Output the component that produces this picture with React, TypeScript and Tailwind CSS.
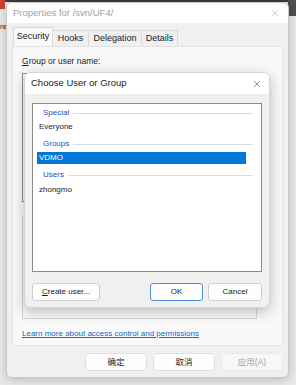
import { X } from "lucide-react";

const ui = { fontFamily: '"Liberation Sans", "Noto Sans CJK SC", Arial, sans-serif' };

function GroupHeader({ label }: { label: string }) {
  return (
    <div className="flex items-center h-[14px] pl-[10px] pr-[8px] gap-[4px]">
      <span className="text-[8px] text-[#2a4cb4]">{label}</span>
      <div className="flex-1 h-px bg-[#d5dbe8]" />
    </div>
  );
}

function ChooseDialog() {
  return (
    <div className="absolute left-[24px] top-[72px] w-[246px] h-[236px] rounded-[6px] overflow-hidden bg-[#f0f0f0] border border-[#d6d6d6] shadow-[0_4px_14px_rgba(0,0,0,0.25)] flex flex-col">
      <div className="h-[21px] bg-white flex items-center justify-between pl-[6px] pr-[7px] shrink-0">
        <span className="text-[9.5px] text-[#1a1a1a]">Choose User or Group</span>
        <X className="w-[10px] h-[10px] text-[#333]" strokeWidth={1.3} />
      </div>
      <div className="flex-1 flex flex-col px-[7px] pt-[9px] pb-[7px]">
        <div className="h-[169px] bg-white border border-[#8a8a8a] pt-[2px]">
          <GroupHeader label="Special" />
          <div className="h-[14px] flex items-center pl-[6px] text-[8px] text-[#1a1a1a]">Everyone</div>
          <div className="mt-[3px]">
            <GroupHeader label="Groups" />
          </div>
          <div className="mt-[1px] ml-[4px] w-[209px] h-[12px] bg-[#0078d7] flex items-center pl-[2px] text-[8px] text-white">
            VDMO
          </div>
          <div className="mt-[4px]">
            <GroupHeader label="Users" />
          </div>
          <div className="mt-[1px] h-[14px] flex items-center pl-[6px] text-[8px] text-[#1a1a1a]">zhongmo</div>
        </div>
        <div className="mt-[11px] flex items-center">
          <button className="w-[68px] h-[18px] bg-[#fdfdfd] border border-[#d0d0d0] rounded-[3px] text-[8px] text-[#1a1a1a]">
            <span className="underline">C</span>reate user...
          </button>
          <div className="flex-1" />
          <button className="w-[53px] h-[18px] bg-[#fdfdfd] border border-[#4a8fd8] rounded-[3px] text-[8px] text-[#1a1a1a]">
            OK
          </button>
          <button className="ml-[5px] w-[54px] h-[18px] bg-[#fdfdfd] border border-[#d0d0d0] rounded-[3px] text-[8px] text-[#1a1a1a]">
            Cancel
          </button>
        </div>
      </div>
    </div>
  );
}

export default function App() {
  return (
    <div className="relative w-[296px] h-[385px] overflow-hidden bg-[#e9e9e9]" style={ui}>
      {/* desktop behind the window */}
      <div className="absolute left-0 top-0 w-full h-[2px] bg-[#3d3d3d]" />
      <div className="absolute left-0 top-0 w-[5px] h-[9px] bg-[#c9432f]" />
      <div className="absolute right-0 top-0 w-[8px] h-[16px] bg-[#4e4e4e]" />
      <div className="absolute left-0 top-[22px] text-[7px] text-[#222] tracking-[-0.5px]">ne</div>

      {/* properties window */}
      <div className="absolute left-[6px] top-[2px] w-[283px] h-[376px] rounded-[6px] overflow-hidden bg-[#f0f0f0] border border-[#c8c8c8] shadow-[0_2px_10px_rgba(0,0,0,0.2)] flex flex-col">
        <div className="h-[20px] bg-white flex items-center justify-between pl-[6px] pr-[8px] shrink-0">
          <span className="text-[9.5px] text-[#a3a3a3]">Properties for /svn/UF4/</span>
          <X className="w-[10px] h-[10px] text-[#9a9a9a]" strokeWidth={1.2} />
        </div>

        <div className="flex-1 flex flex-col px-[5px] pt-[4px]">
          <div className="flex items-end h-[19px] pl-[1px] text-[9px] text-[#1a1a1a]">
            <div className="h-[19px] w-[40px] flex items-center justify-center bg-[#f9f9f9] border border-b-0 border-[#d9d9d9]">Security</div>
            <div className="h-[16px] w-[36px] flex items-center justify-center border-t border-r border-[#dadada]">Hooks</div>
            <div className="h-[16px] w-[53px] flex items-center justify-center border-t border-r border-[#dadada]">Delegation</div>
            <div className="h-[16px] w-[36px] flex items-center justify-center border-t border-r border-[#dadada]">Details</div>
          </div>

          <div className="h-[300px] bg-[#f9f9f9] border border-[#e2e2e2] flex flex-col pl-[9px] pr-[25px] pt-[8px]">
            <div className="text-[8.5px] text-[#1a1a1a]">
              <span className="underline">G</span>roup or user name:
            </div>
            <div className="mt-[5px] h-[129px] bg-white border border-[#8e8e8e]">
              <div className="h-[6px] flex border-b border-[#e5e5e5]">
                <div className="w-[159px] border-r border-[#e0e0e0]" />
                <div className="w-[59px] border-r border-[#e0e0e0]" />
              </div>
            </div>
            <div className="mt-[14px] h-[103px] border border-[#d8d8d8] border-t-0" />
            <div className="mt-[9px] text-[8px] text-[#2066c8] underline">
              Learn more about access control and permissions
            </div>
          </div>

          <div className="flex justify-end gap-[6px] mt-[7px]">
            <button className="w-[62px] h-[18px] bg-[#fdfdfd] border border-[#e0e0e0] rounded-[3px] text-[8.5px] text-[#1a1a1a]">确定</button>
            <button className="w-[62px] h-[18px] bg-[#fdfdfd] border border-[#e0e0e0] rounded-[3px] text-[8.5px] text-[#1a1a1a]">取消</button>
            <button className="w-[62px] h-[18px] bg-[#f7f7f7] border border-[#eaeaea] rounded-[3px] text-[8.5px] text-[#a0a0a0]">应用(A)</button>
          </div>
        </div>
      </div>

      <ChooseDialog />
    </div>
  );
}
